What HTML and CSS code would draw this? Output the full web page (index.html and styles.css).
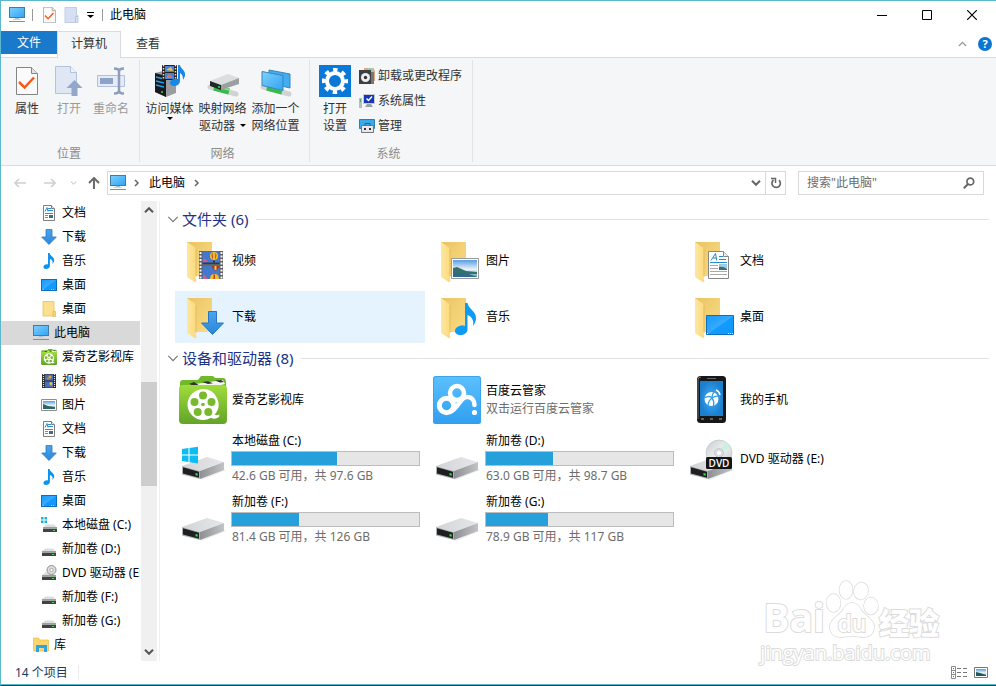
FILE: index.html
```html
<!DOCTYPE html>
<html lang="zh-CN">
<head>
<meta charset="utf-8">
<title>此电脑</title>
<link rel="stylesheet" href="styles.css">
</head>
<body>
<svg class="sprite" aria-hidden="true">
  <defs>
    <linearGradient id="g-screen" x1="0" y1="0" x2="1" y2="1"><stop offset="0" stop-color="#7fd0ff"/><stop offset="1" stop-color="#2fa4f2"/></linearGradient>
    <linearGradient id="g-desk" x1="0" y1="0" x2="1" y2="1"><stop offset="0" stop-color="#159bff"/><stop offset=".5" stop-color="#36aaff"/><stop offset=".52" stop-color="#129aff"/><stop offset="1" stop-color="#0f98ff"/></linearGradient>
    <linearGradient id="g-back" x1="0" y1="0" x2="1" y2="1"><stop offset="0" stop-color="#e9c465"/><stop offset="1" stop-color="#fbdc83"/></linearGradient>
    <linearGradient id="g-flap" x1="0" y1="0" x2="1" y2="0"><stop offset="0" stop-color="#ffe7a0"/><stop offset="1" stop-color="#fbd97c"/></linearGradient>
    <linearGradient id="g-arrow" x1="0" y1="0" x2="0" y2="1"><stop offset="0" stop-color="#4ba5ef"/><stop offset="1" stop-color="#2c86da"/></linearGradient>
    <linearGradient id="g-top" x1="0" y1="0" x2="1" y2="0"><stop offset="0" stop-color="#d3d4d6"/><stop offset="1" stop-color="#e6e7ea"/></linearGradient>
    <linearGradient id="g-side" x1="0" y1="0" x2="1" y2="0"><stop offset="0" stop-color="#8d8f92"/><stop offset="1" stop-color="#c2c3c5"/></linearGradient>
    <linearGradient id="g-green" x1="0" y1="0" x2="0" y2="1"><stop offset="0" stop-color="#a0dc3c"/><stop offset="1" stop-color="#62a428"/></linearGradient>
    <linearGradient id="g-cloud" x1="0" y1="0" x2="0" y2="1"><stop offset="0" stop-color="#5cc0ff"/><stop offset="1" stop-color="#2f9ff0"/></linearGradient>
    <linearGradient id="g-sky" x1="0" y1="0" x2="0" y2="1"><stop offset="0" stop-color="#5b9be2"/><stop offset=".55" stop-color="#e8f4fb"/><stop offset="1" stop-color="#5c9db5"/></linearGradient>
    <linearGradient id="g-disc" x1="0" y1="0" x2="1" y2="1"><stop offset="0" stop-color="#c9cdd0"/><stop offset=".5" stop-color="#eceeef"/><stop offset="1" stop-color="#c4c8cb"/></linearGradient>
    <radialGradient id="g-phone"><stop offset="0" stop-color="#45b0f6"/><stop offset="1" stop-color="#1b7fd0"/></radialGradient>
  </defs>
  <symbol id="pc" viewBox="0 0 16 16"><rect x=".5" y=".5" width="15" height="10" fill="url(#g-screen)" stroke="#3e7da8"/><path d="M6 11h4v2H6z" fill="#a9c3d4"/><path d="M4 12.500h8" stroke="#c5d6e0"/><path d="M0 14.500h16" stroke="#6f95ad"/></symbol>
  <symbol id="desktop" viewBox="0 0 16 16"><rect x=".5" y="2.500" width="15" height="11" fill="url(#g-desk)" stroke="#0b6fbe"/><path d="M1.500 12.500h1M10 12.500h4" stroke="#9ad4ff" stroke-dasharray="1 1"/></symbol>
  <symbol id="doc" viewBox="0 0 16 16"><path d="M2.500.500h8l3 3v12h-11z" fill="#fff" stroke="#7f7f7f"/><path d="M10.500.500v3h3" fill="#eee" stroke="#7f7f7f"/><path d="M4 6.500l2-4 1 4M7 3.500h3M7 5.500h5M4 8.500h8" stroke="#2e8fca" fill="none"/><path d="M4 10.500h3M4 12.500h3" stroke="#8a8a8a"/><path d="M8 10h4v3H8z" fill="#3d6f7d"/></symbol>
  <symbol id="down" viewBox="0 0 16 16"><path d="M5 .500h6v7.500h4.300L8 15.500.700 8H5z" fill="url(#g-arrow)" stroke="#2778c0" stroke-width=".8"/></symbol>
  <symbol id="music" viewBox="0 0 16 16"><path d="M7 0h1.700c.200 3 4.800 4 4.500 7.500-.100 1.600-1 2.700-1.900 3.500.800-2.500.200-4.200-2.400-5v7c0 2-2 3-3.800 3-1.500 0-2.700-.800-2.700-2 0-1.700 2.200-3 4.600-2.600z" fill="#0c93f0"/></symbol>
  <symbol id="folder" viewBox="0 0 16 16"><path d="M2 .500h11V15H2z" fill="#fde08f" stroke="#e9bf5c" stroke-width=".8"/><path d="M13 10l1.500.500V15.500H12V10.500z" fill="#fbd46f" stroke="#e0ae3e" stroke-width=".6"/></symbol>
  <symbol id="film" viewBox="0 0 16 16"><path d="M1 1h14v14H1z" fill="#2c2c2c"/><path d="M2.500 1v14M13.500 1v14" stroke="#e6e6e6" stroke-width="1.200" stroke-dasharray="1 1"/><path d="M4 1.500h8v6H4zM4 8.500h8v6H4z" fill="#3f70c4"/><path d="M5 6l2-2 2 3zM8 12l3-1 1 3z" fill="#c9765a"/><circle cx="9" cy="4" r="1.500" fill="#e0a52c"/><circle cx="10" cy="10.500" r="1.500" fill="#f2c438"/></symbol>
  <symbol id="picture" viewBox="0 0 16 16"><path d="M.500 2.500h15v11H.500z" fill="#fff" stroke="#8e8e8e"/><path d="M2 4h12v8H2z" fill="url(#g-sky)"/><path d="M2 7l5 2 7 1v2H2z" fill="#2d675f"/></symbol>
  <symbol id="iqiyi" viewBox="0 0 48 48"><path d="M1 10V7q0-3 3-3h15l3-4h12l2 2h8q3 0 3 4v8H1z" fill="#6fb92a"/><path d="M2 10l42-6 2 4-32 8z" fill="#f4f6ee"/><path d="M10 8l5 2 5-.800L15 6zM23 6l6 2 5-.700-5-2zM36 4.500l5 2 4-.500-3-2z" fill="#333"/><rect y="9" width="48" height="39" rx="4" fill="url(#g-green)"/><path d="M24 13a15.500 15.500 0 1 0 8 28.800q4 2 8-.800l.500-2.500q-3 1.300-5 .300A15.500 15.500 0 0 0 24 13z" fill="#fff"/><g fill="#7ab92e"><circle cx="24" cy="19.500" r="4"/><circle cx="15.500" cy="26" r="4"/><circle cx="32.500" cy="26" r="4"/><circle cx="18.700" cy="36" r="4"/><circle cx="29.300" cy="36" r="4"/><circle cx="24" cy="28.500" r="1.800"/></g></symbol>
  <symbol id="drive-s" viewBox="0 0 16 16"><path d="M4 7.500h8l3 3H1z" fill="#dcddde"/><path d="M1 10.500h14V15H1z" fill="#404244"/><path d="M1 10.500h14v1.500H1z" fill="#a2a4a6"/><path d="M11 13h2v1h-2z" fill="#3ce04c"/></symbol>
  <symbol id="drive-c" viewBox="0 0 16 16"><use href="#drive-s" x="1"/><path d="M0 0h2.500v2.500H0zM3.500 0H6v2.500H3.500zM0 3.500h2.500V6H0zM3.500 3.500H6V6H3.500z" fill="#12b3ee"/></symbol>
  <symbol id="drive-d" viewBox="0 0 16 16"><use href="#drive-s"/><circle cx="10.500" cy="5" r="4.500" fill="#e0e0e0" stroke="#8f8f8f"/><circle cx="10.500" cy="5" r="1.700" fill="#fff" stroke="#8f8f8f" stroke-width=".8"/></symbol>
  <symbol id="library" viewBox="0 0 16 16"><path d="M.500 1h5l1 2H15.500v11H.500z" fill="#fbd56d" stroke="#eabb48" stroke-width=".7"/><path d="M3 15V8h11v7h-3v-4H6v4z" fill="#27a5e4"/></symbol>
  <symbol id="folder-l" viewBox="0 0 48 48"><path d="M8 5h25v34H8z" fill="url(#g-back)"/><path d="M8 5l8.500 6v28.500l1 5-1.500.800L8 40z" fill="url(#g-flap)"/><path d="M17 12v28" stroke="#dcb455" stroke-width=".6"/></symbol>
  <symbol id="film-l" viewBox="0 0 48 48"><use href="#folder-l"/><path d="M20 14h24v28H20z" fill="#606060"/><path d="M21.500 15v27M42.500 15v27" stroke="#f5f5f5" stroke-width="2" stroke-dasharray="2 1.500"/><path d="M23.500 14.500h17V27h-17zM23.500 28.500h17V42h-17z" fill="#4279cf"/><path d="M24 22q3-1 5 3h-5zM24 37l4 4v1h-4z" fill="#d9588b"/><path d="M23.500 25.500h17V27h-17z" fill="#24424a"/><circle cx="35" cy="19" r="4" fill="#f2bd29"/><path d="M33.500 15.500q-2 3.500.5 7zM36.500 15.500q2 3.500-.5 7z" fill="#c13e23"/><path d="M34 23.500h2v2h-2z" fill="#432"/><path d="M33 29h7q0 3-3.500 5-3.500-2-3.500-5z" fill="#a93424"/><path d="M35.500 29h2v4h-2z" fill="#f5c838"/><path d="M31 42q0-5 4.500-5t4.500 5z" fill="#f3bd2a"/><path d="M34.500 37.500h1.500V42h-1.500z" fill="#c83c24"/></symbol>
  <symbol id="picture-l" viewBox="0 0 48 48"><use href="#folder-l"/><path d="M18.500 21.500h27v20h-27z" fill="#fff" stroke="#999"/><path d="M20 23h24v17H20z" fill="url(#g-sky)"/><path d="M20 31l4-1 9 4 11 1v2H20z" fill="#36706a"/><path d="M20 36l16 1 8 3H20z" fill="#2e6a8c"/></symbol>
  <symbol id="doc-l" viewBox="0 0 48 48"><use href="#folder-l"/><path d="M21.500 14.500h15l5 5v22h-20z" fill="#fff" stroke="#868686"/><path d="M36.500 14.500v5h5" fill="#eee" stroke="#868686"/><path d="M24 23.500l4.500-7 1.200 7M26 21h3.500M32 19.500h4M32 22.500h7M23 25.500h17" stroke="#268acb" fill="none"/><path d="M23 28.500h8M23 31.500h8M23 34.500h17M23 37.500h17" stroke="#aaa"/><path d="M32 27h8v6h-8z" fill="#9dcbe4"/><path d="M32 30q4-1 8 2v1h-8z" fill="#3c6e6b"/></symbol>
  <symbol id="down-l" viewBox="0 0 48 48"><use href="#folder-l"/><path d="M29.500 18.500h8v11.500h7L33.500 41.500 22.500 30h7z" fill="url(#g-arrow)" stroke="#2778c0"/></symbol>
  <symbol id="music-l" viewBox="0 0 48 48"><use href="#folder-l"/><path d="M32 10h2.500c1 6 8.500 8 8.500 15 0 3.500-1.500 6-3 8 1-5-.500-9-5.500-11v14.500c0 3.500-3.500 5.500-7 5.500-3 0-5.500-1.500-5.500-4 0-3.500 5-6.500 10-5z" fill="#0d9bf4"/></symbol>
  <symbol id="desktop-l" viewBox="0 0 48 48"><use href="#folder-l"/><path d="M19.500 22.500h27v19h-27z" fill="url(#g-desk)" stroke="#0a70bf"/><path d="M20 40.500h2M41 40.500h5" stroke="#d8f0ff" stroke-dasharray="1 1"/></symbol>
  <symbol id="drive-l" viewBox="0 0 48 48"><path d="M21 44l24-10 2 1-24 10z" fill="#eee"/><path d="M3 31l25-9 17 5-24 9z" fill="url(#g-top)"/><path d="M21 36l24-9v8l-24 9z" fill="url(#g-side)"/><path d="M3 31l18 5v8L3 39.500z" fill="#aeb0b2"/><path d="M4 32.300l16 4.500v6L4 38.500z" fill="#1d1f20"/><path d="M16.500 38l2.200.600v2.200l-2.200-.600z" fill="#2fe33d"/></symbol>
  <symbol id="win-l" viewBox="0 0 48 48"><use href="#drive-l"/><path d="M3 14l6.500-1v6.500H3zM10.500 12.900l8.500-1.200v7.800h-8.500zM3 20.500h6.500V27L3 26zM10.500 20.500H19v8l-8.500-1.300z" fill="#0ebcf2"/></symbol>
  <symbol id="dvd-l" viewBox="0 0 48 48"><use href="#drive-l"/><circle cx="32" cy="18" r="13" fill="url(#g-disc)" stroke="#b9bdc0" stroke-width=".6"/><path d="M32 18l6-11 5 5z" fill="#c9f0e4"/><circle cx="32" cy="18" r="4.500" fill="#dadcde" stroke="#b3b6b8" stroke-width=".6"/><circle cx="32" cy="18" r="2" fill="#fff"/><rect x="19" y="22" width="26" height="12" rx="1.500" fill="#151515"/><text x="32" y="32" class="dvd-text" text-anchor="middle">DVD</text></symbol>
  <symbol id="cloud-l" viewBox="0 0 48 48"><rect width="48" height="48" rx="2.500" fill="url(#g-cloud)"/><path d="M.500 46V3Q.500.500 3 .500h42q2.500 0 2.500 2.500v43" fill="none" stroke="#3aa5ee"/><g fill="none" stroke="#fff"><circle cx="24" cy="17" r="7" stroke-width="4.500"/><circle cx="13.500" cy="29.500" r="7.200" stroke-width="5"/><path d="M17 36c9-4 10-15 17-15 5 0 7.500 4 7.500 8" stroke-width="4.500" stroke-linecap="round"/></g><circle cx="41.500" cy="36.500" r="2.600" fill="#fff"/></symbol>
  <symbol id="phone-l" viewBox="0 0 48 48"><rect x="10" width="29" height="47" rx="3.500" fill="#171717"/><path d="M11 43V4q0-3 3-3" fill="none" stroke="#777"/><path d="M20 2.500h9" stroke="#666"/><path d="M13 5h23v35H13z" fill="url(#g-phone)"/><path d="M14 43h3M23 43h3M32 43h3" stroke="#aaa"/><circle cx="24.500" cy="23" r="7" fill="#fff"/><path d="M17 22q6-3 8 0 0-5 4-8M25 22q4-3 8-1M25 22q-4 3-4 8M25 22q3 4 1 9" fill="none" stroke="#349fe8" stroke-width="1.300"/><path d="M29 14q3 1 4 5" fill="none" stroke="#fff" stroke-width="1.500"/></symbol>
  <symbol id="sheet" viewBox="0 0 22 28"><path d="M.500.500h15l6 6v21H.500z" fill="#fafafa" stroke="#858585"/><path d="M15.500.500v6h6" fill="#e2e2e2" stroke="#858585"/><path d="M3 15l5.500 5.500L18 10.500" fill="none" stroke="#f45b17" stroke-width="2.500"/></symbol>
  <symbol id="chev" viewBox="0 0 10 6"><path d="M1 .800l4 4 4-4" fill="none" stroke="currentColor" stroke-width="var(--w,1.500)"/></symbol>
  <symbol id="cable" viewBox="0 0 32 32"><path d="M3 22l26 7" stroke="#cfd4d2" stroke-width="5" stroke-linecap="round"/><path d="M7 22.500l15 4" stroke="#37b94b" stroke-width="6"/><path d="M8 21l14 3.700" stroke="#83dd8a" stroke-width="2"/></symbol>
</svg>

<div class="window">
  <header class="titlebar">
    <svg class="i16"><use href="#pc"/></svg>
    <span class="tick"></span>
    <button class="quick" aria-label="属性"><svg class="quick-sheet"><use href="#sheet"/></svg></button>
    <button class="quick" aria-label="新建文件夹"><svg class="i16" viewBox="0 0 16 16"><path d="M2 .500h11.500v8H15v7H2z" fill="#d6e0f2" stroke="#c1cde4"/><path d="M12.500 15V9.500H15" fill="none" stroke="#b6c4df"/></svg></button>
    <button class="quick quick-menu" aria-label="自定义快速访问工具栏"><svg width="7" height="6" viewBox="0 0 7 6"><path d="M0 .500h7" stroke="#000"/><path d="M0 3h7L3.500 6z"/></svg></button>
    <span class="tick"></span>
    <h1>此电脑</h1>
    <div class="caption">
      <button aria-label="最小化"><svg width="10" height="10"><path d="M0 5.500h10" stroke="#000"/></svg></button>
      <button aria-label="最大化"><svg width="10" height="10"><path d="M.500.500h9v9h-9z" fill="none" stroke="#000"/></svg></button>
      <button aria-label="关闭"><svg width="10" height="10"><path d="M0 0l10 10M10 0L0 10" stroke="#000" stroke-width="1.200"/></svg></button>
    </div>
  </header>

  <nav class="tabs">
    <button class="tab file">文件</button>
    <button class="tab active">计算机</button>
    <button class="tab">查看</button>
    <div class="tabs-end">
      <button aria-label="最小化功能区"><svg class="collapse"><use href="#chev"/></svg></button>
      <button class="help" aria-label="帮助">?</button>
    </div>
  </nav>

  <section class="ribbon">
    <div class="group place">
      <div class="tools">
        <button class="big"><span class="art"><svg width="22" height="28"><use href="#sheet"/></svg></span>属性</button>
        <button class="big" disabled><span class="art"><svg width="28" height="30" viewBox="0 0 28 30"><path d="M.500.500h15l6 6v21H.500z" fill="#dfe7f5" stroke="#b4c2dd"/><path d="M15.500.500v6h6" fill="#eef2fa" stroke="#b4c2dd"/><path d="M19.500 14l8 8h-5v8h-6v-8h-5z" fill="#93a7cb"/></svg></span>打开</button>
        <button class="big" disabled><span class="art"><svg width="28" height="28" viewBox="0 0 28 28"><path d="M.500 8.500h27v11H.500z" fill="#e4eaf6" stroke="#b2c0dc"/><path d="M3 11h13v6H3z" fill="#8ea3c9"/><path d="M17 1.500q5 0 5 3 0-3 5-3M17 26.500q5 0 5-3 0 3 5 3M22 4v20" fill="none" stroke="#8c9dbf" stroke-width="2.500"/></svg></span>重命名</button>
      </div>
      <h2>位置</h2>
    </div>
    <div class="group network">
      <div class="tools">
        <button class="big"><span class="art"><svg width="32" height="32" viewBox="0 0 32 32"><path d="M1 8l12-3 9 3v20l-10 4-11-5z" fill="#9a9da0"/><path d="M1 8l11 3v21L1 27z" fill="#17191b"/><path d="M2 12l8 2M2 16l8 2M2 20l8 2" stroke="#239ff0" stroke-width="1.300"/><circle cx="8" cy="27" r="1" fill="#35dd48"/><path d="M8 0h15v15H8z" fill="#222"/><path d="M9.500 0v15M21.500 0v15" stroke="#ddd" stroke-width="1.500" stroke-dasharray="1.500 1.500"/><path d="M11 1h9v6h-9zM11 8h9v6h-9z" fill="#4b80db"/><path d="M12 5l5-3 2 4z" fill="#f1c435"/><path d="M12 13l3-4 4 4z" fill="#dd7a42"/><path d="M24 0h2c.500 4 6 5 5 11l-2 4c0-4-1-6-3-7v8c0 3-3 5-6 5-2 0-4-1-4-3 0-3 4-5 8-4z" fill="#1689e8"/></svg></span>访问媒体<i class="caret below"></i></button>
        <button class="big"><span class="art"><svg width="32" height="32" viewBox="0 0 32 32"><use href="#cable"/><path d="M3 16l18-7 11 4-18 7z" fill="#dcdddf"/><path d="M14 20l18-7v6l-18 6z" fill="#9c9ea1"/><path d="M3 16l11 4v5L3 21z" fill="#232526"/><path d="M11 21l2 .600v1.500l-2-.600z" fill="#37e04a"/></svg></span>映射网络<br>驱动器<i class="caret"></i></button>
        <button class="big"><span class="art"><svg width="32" height="32" viewBox="0 0 32 32"><use href="#cable"/><path d="M9 5l21 4v14L9 18z" fill="#41aef0" stroke="#3a84b8"/><path d="M2 6.500l21 4v15l-21-5z" fill="url(#g-screen)" stroke="#3a84b8"/></svg></span>添加一个<br>网络位置</button>
      </div>
      <h2>网络</h2>
    </div>
    <div class="group system">
      <div class="tools">
        <button class="big"><span class="art"><svg width="32" height="32" viewBox="0 0 32 32"><path d="M0 0h32v32H0z" fill="#0a78d6"/><g fill="none" stroke="#fff"><circle cx="16" cy="16" r="8" stroke-width="4"/><circle cx="16" cy="16" r="10.800" stroke-width="4.500" stroke-dasharray="4.240 4.240" stroke-dashoffset="2.120"/></g></svg></span>打开<br>设置</button>
        <div class="small-list">
          <button><svg class="i16" viewBox="0 0 16 16"><path d="M5 0h9l2 3v10H5z" fill="#d8a984"/><path d="M9 0h6v7H9z" fill="#a9c7a0"/><path d="M0 2h12v14H0z" fill="#3d4043"/><path d="M12 4h3v12h-3z" fill="#75787a"/><circle cx="6.500" cy="9.500" r="4.500" fill="#eee"/><circle cx="6.500" cy="9.500" r="1.700" fill="#333"/></svg>卸载或更改程序</button>
          <button><svg class="i16" viewBox="0 0 16 16"><path d="M0 5h3v10H0z" fill="#b9bdb9"/><path d="M1 6h1v3H1z" fill="#36c546"/><path d="M4 1h12v10H4z" fill="#c7cbd0"/><path d="M5 2h10v8H5z" fill="#1736b8"/><path d="M7.500 5.500l2 2L13 3.500" stroke="#fff" stroke-width="1.500" fill="none"/><path d="M8 11h4l2 3H6z" fill="#9ca1a5"/></svg>系统属性</button>
          <button><svg class="i16" viewBox="0 0 16 16"><path d="M.500 1.500h15v9H.500z" fill="#3aa9ec" stroke="#2c7fb5"/><path d="M2.500 7.500h12v7h-12z" fill="#e8e8e8" stroke="#777"/><path d="M6 7.500v-2h5v2" fill="none" stroke="#555"/><path d="M5 10h2v2H5zM10 10h2v2h-2z" fill="#333"/></svg>管理</button>
        </div>
      </div>
      <h2>系统</h2>
    </div>
  </section>

  <div class="location">
    <button class="go" disabled aria-label="后退"><svg width="12" height="10" viewBox="0 0 12 10"><path d="M5 1L1 5l4 4M1 5h11" fill="none" stroke="#d0d0d0" stroke-width="1.600"/></svg></button>
    <button class="go forward" disabled aria-label="前进"><svg width="12" height="10" viewBox="0 0 12 10"><path d="M7 1l4 4-4 4M11 5H0" fill="none" stroke="#d0d0d0" stroke-width="1.600"/></svg></button>
    <button class="recent" aria-label="最近浏览的位置"><svg width="7" height="4"><use href="#chev"/></svg></button>
    <button class="up" aria-label="上移"><svg width="12" height="12" viewBox="0 0 12 12"><path d="M1 6l5-5 5 5M6 1v11" fill="none" stroke="#6b6b6b" stroke-width="2"/></svg></button>
    <div class="address">
      <svg class="i16"><use href="#pc"/></svg>
      <svg class="crumb" viewBox="0 0 6 8"><path d="M1 1l3 3-3 3" fill="none" stroke="#666" stroke-width="1.500"/></svg>
      <a href="#">此电脑</a>
      <svg class="crumb" viewBox="0 0 6 8"><path d="M1 1l3 3-3 3" fill="none" stroke="#666" stroke-width="1.500"/></svg>
      <button class="history" aria-label="以前的位置"><svg width="10" height="6"><use href="#chev"/></svg></button>
      <button class="refresh" aria-label="刷新"><svg width="12" height="12" viewBox="0 0 12 12"><path d="M3.500 3A4.200 4.200 0 1 0 9 3.200" fill="none" stroke="#666" stroke-width="1.700"/><path d="M1 1.500h4.500V6" fill="none" stroke="#666" stroke-width="1.500"/></svg></button>
    </div>
    <label class="search">
      <input type="search" placeholder='搜索"此电脑"' aria-label="搜索此电脑">
      <svg width="12" height="12" viewBox="0 0 12 12"><circle cx="7.300" cy="4.500" r="3.400" fill="none" stroke="#666" stroke-width="1.700"/><path d="M5 7L.800 11.200" stroke="#666" stroke-width="2"/></svg>
    </label>
  </div>

  <div class="body">
    <aside class="tree">
      <ul>
        <li><svg class="i16"><use href="#doc"/></svg>文档</li>
        <li><svg class="i16"><use href="#down"/></svg>下载</li>
        <li><svg class="i16"><use href="#music"/></svg>音乐</li>
        <li><svg class="i16"><use href="#desktop"/></svg>桌面</li>
        <li><svg class="i16"><use href="#folder"/></svg>桌面</li>
        <li class="root selected"><svg class="i16"><use href="#pc"/></svg>此电脑</li>
        <li><svg class="i16"><use href="#iqiyi"/></svg>爱奇艺影视库</li>
        <li><svg class="i16"><use href="#film"/></svg>视频</li>
        <li><svg class="i16"><use href="#picture"/></svg>图片</li>
        <li><svg class="i16"><use href="#doc"/></svg>文档</li>
        <li><svg class="i16"><use href="#down"/></svg>下载</li>
        <li><svg class="i16"><use href="#music"/></svg>音乐</li>
        <li><svg class="i16"><use href="#desktop"/></svg>桌面</li>
        <li><svg class="i16"><use href="#drive-c"/></svg>本地磁盘 (C:)</li>
        <li><svg class="i16"><use href="#drive-s"/></svg>新加卷 (D:)</li>
        <li><svg class="i16"><use href="#drive-d"/></svg>DVD 驱动器 (E:)</li>
        <li><svg class="i16"><use href="#drive-s"/></svg>新加卷 (F:)</li>
        <li><svg class="i16"><use href="#drive-s"/></svg>新加卷 (G:)</li>
        <li class="root"><svg class="i16"><use href="#library"/></svg>库</li>
      </ul>
      <div class="scrollbar">
        <button aria-label="向上滚动"><svg class="flip" width="10" height="6"><use href="#chev"/></svg></button>
        <div class="track"><div class="thumb"></div></div>
        <button aria-label="向下滚动"><svg width="10" height="6"><use href="#chev"/></svg></button>
      </div>
    </aside>

    <main class="content">
      <h2 class="section"><svg width="12" height="7"><use href="#chev"/></svg>文件夹 (6)</h2>
      <div class="tiles">
        <div class="tile"><svg class="i48"><use href="#film-l"/></svg><p>视频</p></div>
        <div class="tile"><svg class="i48"><use href="#picture-l"/></svg><p>图片</p></div>
        <div class="tile"><svg class="i48"><use href="#doc-l"/></svg><p>文档</p></div>
        <div class="tile hover"><svg class="i48"><use href="#down-l"/></svg><p>下载</p></div>
        <div class="tile"><svg class="i48"><use href="#music-l"/></svg><p>音乐</p></div>
        <div class="tile"><svg class="i48"><use href="#desktop-l"/></svg><p>桌面</p></div>
      </div>
      <h2 class="section"><svg width="12" height="7"><use href="#chev"/></svg>设备和驱动器 (8)</h2>
      <div class="tiles">
        <div class="tile"><svg class="i48"><use href="#iqiyi"/></svg><p>爱奇艺影视库</p></div>
        <div class="tile"><svg class="i48"><use href="#cloud-l"/></svg><div><p>百度云管家</p><p class="sub">双击运行百度云管家</p></div></div>
        <div class="tile"><svg class="i48"><use href="#phone-l"/></svg><p>我的手机</p></div>
        <div class="tile drive"><svg class="i48"><use href="#win-l"/></svg><div class="volume"><p>本地磁盘 (C:)</p><div class="bar"><span style="width:56%"></span></div><p class="sub">42.6 GB 可用，共 97.6 GB</p></div></div>
        <div class="tile drive"><svg class="i48"><use href="#drive-l"/></svg><div class="volume"><p>新加卷 (D:)</p><div class="bar"><span style="width:36%"></span></div><p class="sub">63.0 GB 可用，共 98.7 GB</p></div></div>
        <div class="tile drive"><svg class="i48"><use href="#dvd-l"/></svg><p>DVD 驱动器 (E:)</p></div>
        <div class="tile drive"><svg class="i48"><use href="#drive-l"/></svg><div class="volume"><p>新加卷 (F:)</p><div class="bar"><span style="width:36%"></span></div><p class="sub">81.4 GB 可用，共 126 GB</p></div></div>
        <div class="tile drive"><svg class="i48"><use href="#drive-l"/></svg><div class="volume"><p>新加卷 (G:)</p><div class="bar"><span style="width:33%"></span></div><p class="sub">78.9 GB 可用，共 117 GB</p></div></div>
      </div>
    </main>
  </div>

  <footer class="status">
    <span class="count">14 个项目</span>
    <div class="views">
      <button aria-label="详细信息"><svg width="16" height="13" viewBox="0 0 16 13"><path d="M.500.500h4v12h-4zM.500 4.500h4M.500 8.500h4" fill="#fff" stroke="#8a8a8a"/><path d="M2 2.500h1M2 10.500h1" stroke="#d33"/><path d="M2 6.500h1" stroke="#27c"/><path d="M6 2.500h4M12 2.500h4M6 6.500h4M12 6.500h4M6 10.500h4M12 10.500h4" stroke="#777"/></svg></button>
      <button aria-label="大图标"><svg width="14" height="11" viewBox="0 0 14 11"><path d="M.500.500h13v10H.500z" fill="#fff" stroke="#777"/><path d="M2 2h10v7H2z" fill="url(#g-sky)"/><path d="M2 5l4 1 6 2v1H2z" fill="#1f5a5a"/></svg></button>
    </div>
  </footer>

  <div class="watermark" aria-hidden="true">
    <div class="brand">
      <span class="bai">Bai</span>
      <span class="paw"><svg width="54" height="58" viewBox="0 0 54 58"><g fill="#fff" stroke="#dcdcdc" stroke-width="1.500"><ellipse cx="8.500" cy="23" rx="7" ry="9"/><ellipse cx="21" cy="10" rx="6.500" ry="9"/><ellipse cx="36" cy="11" rx="7" ry="8.500" transform="rotate(12 36 11)"/><ellipse cx="46" cy="26" rx="7" ry="8.500"/><path d="M27 23c5 0 7 3 9 7 4 6 13 9 13 17 0 7-5 10-10 10-5 0-7-1-12-1s-7 1-12 1C9 57 5 53 5 47c0-8 9-11 13-17 2-4 4-7 9-7z"/></g></svg><b>du</b></span>
      <span class="exp">经验</span>
    </div>
    <div class="site">jingyan.baidu.com</div>
  </div>
</div>
</body>
</html>
```
FILE: styles.css
```css
* { box-sizing: border-box; }

body {
  margin: 0;
  font: 12px/16px "Noto Sans", "Noto Sans CJK SC", sans-serif;
  color: #000;
  background: #fff;
}

button {
  padding: 0;
  border: 0;
  background: none;
  color: inherit;
  font: inherit;
}

h1, h2, p, ul { margin: 0; padding: 0; font-size: 12px; font-weight: 400; }
svg { display: block; flex: none; }
.sprite { position: absolute; width: 0; height: 0; }
.i16 { width: 16px; height: 16px; }
.i48 { width: 48px; height: 48px; }
.flip { transform: rotate(180deg); }

.window {
  position: relative;
  display: flex;
  flex-direction: column;
  min-height: 100vh;
  border: solid #5cb8cc;
  border-width: 1px 0 1px 1px;
  box-shadow: inset 0 -1px #5cb8cc;
  border-bottom-color: #0b4a5c;
}

/* Title bar */
.titlebar { display: flex; align-items: center; height: 30px; padding: 0 2px 2px 8px; }
.tick { width: 1px; height: 12px; margin: 0 7px; background: #999; }
.quick { display: grid; place-items: center; width: 16px; margin-right: 6px; }
.titlebar .tick + .quick { margin-left: 1px; }
.quick-sheet { width: 13px; height: 16px; }
.quick-menu { width: 10px; margin-right: 0; }
.caption { display: flex; margin-left: auto; }
.caption button { display: grid; place-items: center; width: 45px; height: 28px; }

/* Tabs */
.tabs { display: flex; height: 27px; border-bottom: 1px solid #dadbdc; }
.tab { height: 27px; padding: 0 14px 3px; border: 1px solid transparent; border-bottom: 0; color: #333; }
.tab.file { width: 56px; height: 23px; padding: 1px 0 0; border: 0; background: #1979ca; color: #fff; }
.tab.active { width: 64px; padding: 0 0 3px; border-color: #dadbdc; background: #f5f6f7; }
.tabs-end { display: flex; align-items: center; gap: 11px; margin-left: auto; padding-right: 4px; color: #999; }
.collapse { width: 9px; height: 6px; transform: rotate(180deg); }
.help { width: 14px; height: 14px; border-radius: 50%; background: #0b76d1; color: #fff; font-size: 11px; font-weight: 700; line-height: 14px; text-align: center; }

/* Ribbon */
.ribbon { display: flex; height: 108px; padding: 2px 0 3px; border-bottom: 1px solid #dadbdc; background: #f5f6f7; }
.group { display: flex; flex-direction: column; justify-content: space-between; padding-top: 3px; border-right: 1px solid #e2e3e4; }
.group h2 { color: #8c8c8c; text-align: center; line-height: 16px; }
.tools { display: flex; align-items: flex-start; color: #333; }
.place { padding-left: 5px; padding-right: 7px; }
.network { padding-left: 3px; padding-right: 7px; }
.system { padding-left: 5px; padding-right: 10px; }
.big { width: 53px; line-height: 17px; white-space: nowrap; }
.place .big { width: 42px; }
.system .big { width: 40px; margin-right: 4px; }
.big:disabled { color: #9a9a9a; }
.art { display: grid; place-items: center; height: 36px; margin-bottom: 1px; }
.caret { display: inline-block; margin: 0 0 3px 5px; border: 3px solid transparent; border-top-color: #000; border-bottom: 0; vertical-align: middle; }
.caret.below { display: block; width: 6px; margin: 0 auto; }
.small-list { display: flex; flex-direction: column; }
.small-list button { display: flex; align-items: center; gap: 3px; height: 25px; }

/* Location bar */
.location { display: flex; align-items: center; height: 35px; padding: 0 12px 2px 8px; }
.location > button { display: grid; place-items: center; height: 24px; }
.go { width: 22px; }
.forward { margin: 0 4px 0 8px; }
.recent { width: 17px; color: #bbb; }
.up { width: 24px; margin-right: 1px; }
.address { display: flex; flex: 1; align-items: center; height: 24px; padding-left: 2px; border: 1px solid #d9d9d9; }
.address a { color: #000; text-decoration: none; }
.crumb { width: 6px; height: 8px; margin: 0 9px; }
.address .i16 + .crumb { margin-left: 8px; }
.address button { display: grid; place-items: center; height: 22px; color: #666; --w: 2; }
.history { width: 18px; margin-left: auto; }
.address .refresh { width: 20px; border-left: 1px solid #d9d9d9; }
.search { display: flex; align-items: center; width: 186px; height: 24px; margin-left: 12px; padding: 0 8px; border: 1px solid #d9d9d9; }
.search input { flex: 1; min-width: 0; padding: 0; border: 0; outline: 0; background: none; font: inherit; }
.search input::placeholder { color: #6d6d6d; }

/* Navigation tree */
.body { display: flex; flex: 1; }
.tree { display: flex; width: 159px; padding-right: 2px; border-right: 1px solid #f0f0f0; }
.tree ul { flex: 1; min-width: 0; list-style: none; }
.tree li { display: flex; align-items: center; gap: 5px; height: 24px; padding-left: 40px; overflow: hidden; white-space: nowrap; }
.tree .root { padding-left: 32px; }
.selected { background: #d9d9d9; }
.scrollbar { display: flex; flex-direction: column; width: 16px; margin-left: 1px; background: #f0f0f0; color: #555; --w: 2; }
.scrollbar button { display: grid; place-items: center; height: 18px; }
.track { display: flex; flex: 1; flex-direction: column; }
.track::before { content: ""; flex: 163; }
.track::after { content: ""; flex: 157; }
.thumb { flex: 104; background: #cdcdcd; }

/* Content */
.content { flex: 1; min-width: 0; padding: 8px 7px 0; }
.section { display: flex; align-items: center; gap: 3px; height: 20px; color: #1e3287; font-size: 15px; line-height: 20px; --w: 1; }
.section svg { color: #777; }
.section::after { content: ""; flex: 1; height: 1px; margin-left: 5px; background: #e2e2e2; }
.tiles { display: grid; grid-template-columns: repeat(auto-fill, 250px); gap: 4px; margin: 6px 0 5px 8px; }
.tile { display: flex; align-items: center; gap: 4px; height: 52px; padding: 0 5px 0 4px; }
.tile p { padding-left: 1px; line-height: 18px; }
.tile .sub { color: #6d6d6d; }
.hover { background: #e5f3ff; }
.drive { height: 57px; }
.volume { flex: 1; }
.volume p { line-height: 16px; }
.volume .sub { font-family: "Noto Sans", "Noto Sans CJK TC", sans-serif; }
.bar { height: 15px; margin: 2px 0; border: 1px solid #bcbcbc; background: #e6e6e6; }
.bar span { display: block; height: 100%; background: #26a0da; }
.dvd-text { font: 600 10px "Open Sans", sans-serif; fill: #fff; }

/* Status bar */
.status { display: flex; align-items: center; height: 24px; padding: 0 8px 1px 14px; color: #1e395b; }
.count { padding-right: 10px; border-right: 1px solid #ededed; }
.views { display: flex; align-items: center; gap: 7px; margin-left: auto; }

/* Watermark floating over the content */
.watermark { position: absolute; right: 57px; bottom: 20px; color: #fff; pointer-events: none; -webkit-text-stroke: 2px #dcdcdc; paint-order: stroke fill; }
.brand { display: flex; align-items: flex-end; height: 59px; margin-bottom: 2px; font-weight: 700; }
.bai { font: 700 39px/42px "Open Sans", sans-serif; }
.paw { display: grid; place-items: end center; }
.paw svg, .paw b { grid-area: 1 / 1; }
.paw b { font: 600 23px/30px "Open Sans", sans-serif; }
.exp { font: 900 30px/34px "Noto Sans CJK SC", sans-serif; }
.site { margin-left: -3px; font: 20px/25px "Open Sans", sans-serif; }
```
